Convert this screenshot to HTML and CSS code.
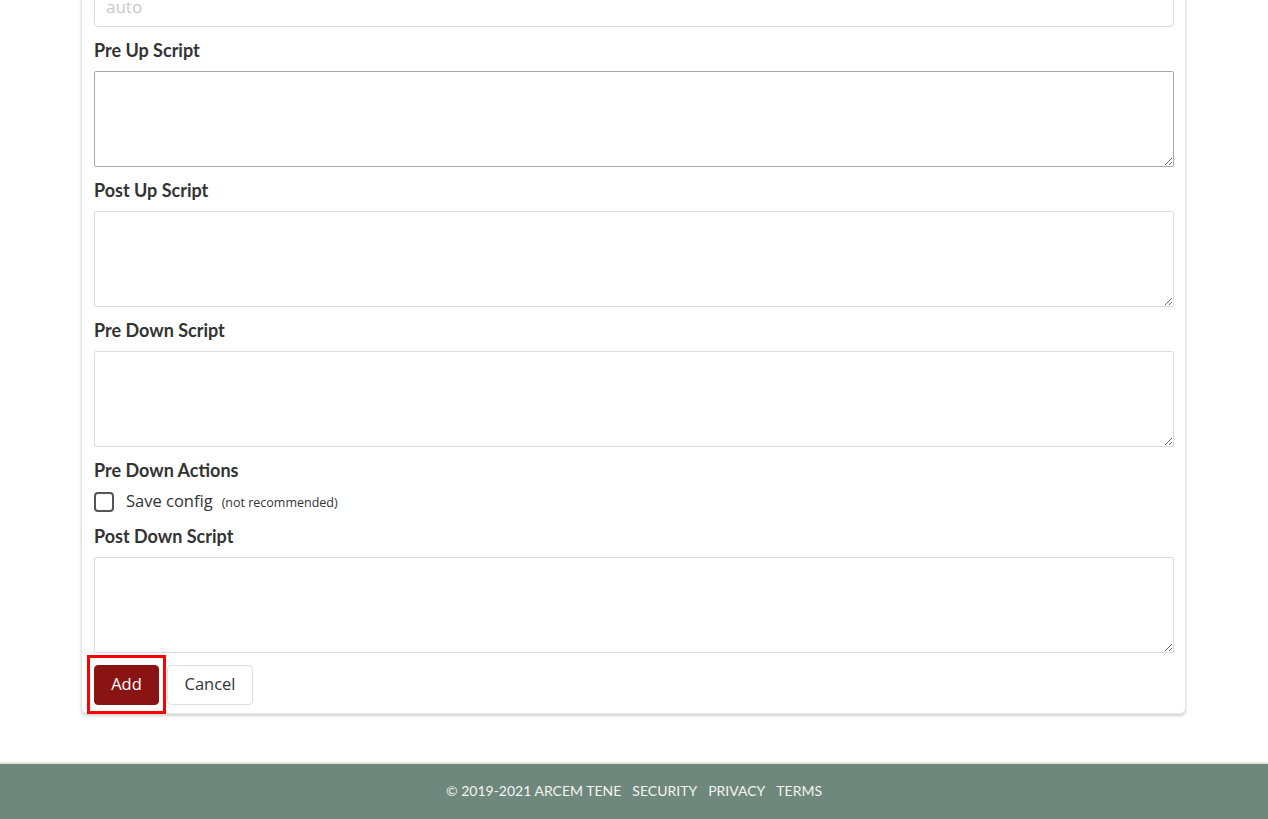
FILE: index.html
```html
<!DOCTYPE html>
<html>
<head>
<meta charset="utf-8">
<link rel="stylesheet" href="styles.css">
</head>
<body>
<main class="page">
  <div class="card">
    <div class="group">
      <input class="field" type="text" placeholder="auto">
    </div>
    <div class="group">
      <label class="label">Pre Up Script</label>
      <textarea class="area area-hover"></textarea>
    </div>
    <div class="group">
      <label class="label">Post Up Script</label>
      <textarea class="area"></textarea>
    </div>
    <div class="group">
      <label class="label">Pre Down Script</label>
      <textarea class="area"></textarea>
    </div>
    <div class="group">
      <label class="label">Pre Down Actions</label>
      <div class="check-row">
        <span class="checkbox"></span>
        <span class="check-text">Save config</span>
        <small class="hint">(not recommended)</small>
      </div>
    </div>
    <div class="group">
      <label class="label">Post Down Script</label>
      <textarea class="area"></textarea>
    </div>
    <div class="actions">
      <span class="highlight"><button class="btn btn-primary">Add</button></span>
      <button class="btn btn-light">Cancel</button>
    </div>
  </div>
</main>
<footer class="footer">
  <span>© 2019-2021 ARCEM TENE</span>
  <span>SECURITY</span>
  <span>PRIVACY</span>
  <span>TERMS</span>
</footer>
</body>
</html>
```

FILE: styles.css
```css
* { box-sizing: border-box; }
html, body { margin: 0; padding: 0; background: #fff; }
body {
  font-family: Lato, "Open Sans", sans-serif;
  color: #333;
  overflow: hidden;
}
.page {
  padding: 0 82px 0 81px;
}
.card {
  margin-top: -23px;
  background: #fff;
  border: 1px solid #e6e6e6;
  border-top: none;
  border-radius: 0 0 6px 6px;
  box-shadow: 0 2px 3px rgba(0,0,0,0.18);
  padding: 12px 11px 8px 12px;
}
.group {
  margin-bottom: 11px;
  display: flex;
  flex-direction: column;
}
.field {
  height: 38px;
  border: 1px solid #dcdcdc;
  border-radius: 4px;
  padding: 4px 11px 8px;
  font-family: "Open Sans", sans-serif;
  font-size: 17px;
  color: #333;
  outline: none;
}
.field::placeholder { color: #c8c8c8; }
.label {
  font-weight: 700;
  font-size: 18px;
  line-height: 24px;
  margin-bottom: 9px;
  color: #333;
}
.area {
  display: block;
  width: 100%;
  height: 96px;
  border: 1px solid #dcdcdc;
  border-radius: 2px;
  resize: vertical;
  font-family: "Open Sans", sans-serif;
  outline: none;
}
.area-hover { border-color: #a9a9a9; }
.check-row {
  display: flex;
  align-items: center;
  height: 22px;
}
.checkbox {
  width: 20px;
  height: 20px;
  border: 2px solid #555;
  border-radius: 4px;
  margin-right: 12px;
}
.check-text {
  font-family: "Open Sans", sans-serif;
  font-size: 16.5px;
  color: #333;
  margin-right: 9px;
  margin-bottom: 3px;
}
.hint {
  font-family: "Open Sans", sans-serif;
  font-size: 12.5px;
  color: #333;
  padding-top: 1px;
}
.actions {
  display: flex;
  gap: 8px;
  margin-top: 12px;
}
.highlight {
  position: relative;
  display: inline-flex;
}
.highlight::after {
  content: "";
  position: absolute;
  left: -7px;
  right: -7px;
  top: -10px;
  bottom: -9px;
  border: 3px solid #ff0000;
  pointer-events: none;
}
.btn {
  height: 40px;
  border-radius: 4px;
  font-family: "Open Sans", sans-serif;
  font-size: 16.5px;
  padding: 0 16px 4px;
  cursor: pointer;
}
.btn-primary {
  width: 65px;
  background: #8a1414;
  border: 1px solid #8a1414;
  color: #fff;
}
.btn-light {
  width: 86px;
  background: #fff;
  border: 1px solid #dedede;
  color: #333;
}
.footer {
  margin-top: 48px;
  border-top: 2px solid #e8e5da;
  background: #6f887d;
  height: 60px;
  display: flex;
  justify-content: center;
  align-items: center;
  gap: 11px;
  padding-bottom: 6px;
  color: #f4f4f0;
  font-family: Lato, sans-serif;
  font-size: 14px;
}
```
